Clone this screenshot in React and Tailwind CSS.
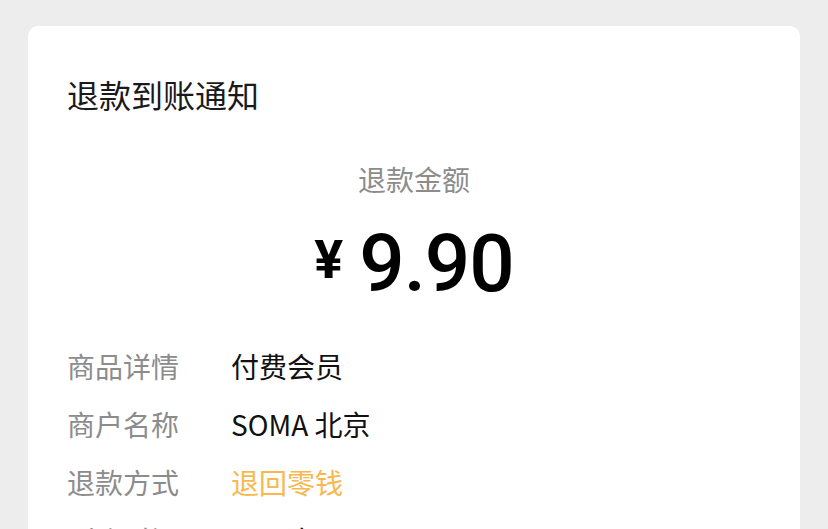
import React from 'react'

const rows = [
  { label: '商品详情', value: '付费会员', color: 'text-[#111111]' },
  { label: '商户名称', value: 'SOMA 北京', color: 'text-[#111111]' },
  { label: '退款方式', value: '退回零钱', color: 'text-[#f8b84e]' },
  { label: '到账时间', value: '2021年09月15日 12:30', color: 'text-[#111111]' },
]

const App = () => {
  return (
    <div className="min-h-screen h-[529px] overflow-hidden bg-[#ededed] pt-[26px] px-[28px] font-['Noto_Sans_CJK_SC','Noto_Sans',sans-serif]">
      <div className="bg-white rounded-[10px] pl-[39px] pr-[39px] pt-[46px] pb-10 min-h-[600px]">
        <h1 className="text-[32px] leading-[45px] text-[#1a1a1a] font-normal">
          退款到账通知
        </h1>

        <div className="flex flex-col items-center mt-[42px]">
          <div className="text-[28px] leading-[40px] text-[#8c8c8c]">退款金额</div>
          <div className="flex items-start mt-[25px] h-[80px] text-black font-['Roboto',sans-serif]">
            <span className="text-[54px] leading-none font-bold mt-[9px] mr-[16px]">¥</span>
            <span className="text-[80px] leading-none font-medium tracking-[-1px]">9.90</span>
          </div>
        </div>

        <div className="flex flex-col mt-[33px]">
          {rows.map((row) => (
            <div key={row.label} className="flex h-[58px] items-center text-[28px] leading-[58px]">
              <span className="w-[164px] shrink-0 text-[#8c8c8c]">{row.label}</span>
              <span className={row.color}>{row.value}</span>
            </div>
          ))}
        </div>
      </div>
    </div>
  )
}

export default App
